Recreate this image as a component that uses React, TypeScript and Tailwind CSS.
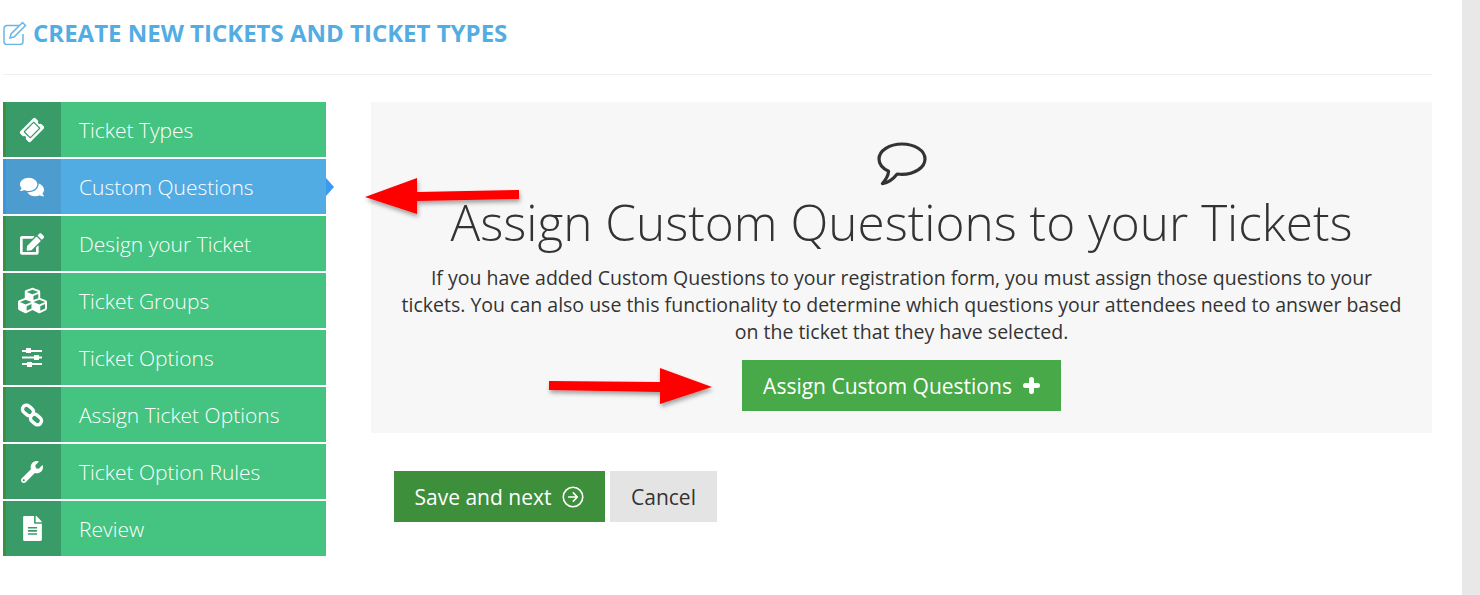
import React from "react";
import { FaTicketAlt, FaComments, FaEdit, FaCubes, FaWrench, FaFileAlt } from "react-icons/fa";
import { IoArrowForwardCircleOutline } from "react-icons/io5";

function SlidersIcon() {
  return (
    <svg width="20" height="19" viewBox="0 0 20 19" fill="white">
      <rect x="0" y="2" width="20" height="2" />
      <rect x="0" y="8.500" width="20" height="2" />
      <rect x="0" y="15" width="20" height="2" />
      <rect x="4" y="0" width="5" height="5" />
      <rect x="12" y="7" width="5" height="5" />
      <rect x="5" y="14" width="5" height="5" />
    </svg>
  );
}

function ChainIcon() {
  return (
    <svg width="24" height="24" viewBox="0 0 24 24" fill="none" stroke="white" strokeWidth="3.400">
      <rect x="2" y="3.500" width="12" height="8" rx="4" transform="rotate(40 8 7.500)" />
      <rect x="10" y="12.500" width="12" height="8" rx="4" transform="rotate(40 16 16.500)" />
    </svg>
  );
}

const items = [
  { label: "Ticket Types", icon: <FaTicketAlt size={22} className="-rotate-45" /> },
  { label: "Custom Questions", icon: <FaComments size={24} />, active: true },
  { label: "Design your Ticket", icon: <FaEdit size={24} /> },
  { label: "Ticket Groups", icon: <FaCubes size={29} /> },
  { label: "Ticket Options", icon: <SlidersIcon /> },
  { label: "Assign Ticket Options", icon: <ChainIcon /> },
  { label: "Ticket Option Rules", icon: <FaWrench size={22} /> },
  { label: "Review", icon: <FaFileAlt size={25} /> },
];

function RedArrow({ dir }: { dir: "left" | "right" }) {
  return (
    <svg width="170" height="56" viewBox="0 0 170 56" className="overflow-visible">
      <defs>
        <filter id={`s-${dir}`} x="-10%" y="-20%" width="120%" height="150%">
          <feDropShadow dx="1" dy="3" stdDeviation="2" floodColor="#000" floodOpacity="0.35" />
        </filter>
      </defs>
      {dir === "left" ? (
        <polygon filter={`url(#s-${dir})`} fill="#ff0000" points="0,26 52,7 52,21 154,19 154,28 52,30 52,43" />
      ) : (
        <polygon filter={`url(#s-${dir})`} fill="#ff0000" points="0,13 111,14 111,0 163,19 111,36 111,24 0,22" />
      )}
    </svg>
  );
}

export default function App() {
  return (
    <div className="flex h-[595px] w-[1480px] overflow-hidden bg-white font-['Open_Sans',sans-serif] text-[#333]">
      <div className="relative h-full w-[1462px] pl-[3px] pr-[30px]">
        <div className="flex h-[75px] items-start border-b border-[#eeeeee] pt-[16px]">
          <svg width="24" height="24" viewBox="0 0 24 24" fill="none" stroke="#68b6e8" strokeWidth="1.500" className="mt-[5px]">
            <path d="M16 4.500H4a3 3 0 0 0-3 3v13a3 3 0 0 0 3 3h13a3 3 0 0 0 3-3V13" />
            <path d="M19.500 1.500l3 3L11 16l-4 1 1-4z" />
          </svg>
          <h1 className="ml-[6px] text-[24px] font-bold leading-[33px] text-[#52ade4]">
            CREATE NEW TICKETS AND TICKET TYPES
          </h1>
        </div>
        <div className="mt-[27px] flex items-start">
          <nav className="flex w-[323px] shrink-0 flex-col gap-[2px]">
            {items.map(({ label, icon, active }) => (
              <div
                key={label}
                className={`relative flex h-[55px] items-center text-white ${active ? "bg-[#51ace3]" : "bg-[#45c380]"}`}
              >
                <div
                  className={`flex h-full w-[58px] shrink-0 items-center justify-center border-l-[3px] pr-[3px] ${
                    active ? "border-[#3b96de] bg-[#4c9ccf]" : "border-[#3f8f3c] bg-[#389b68]"
                  }`}
                >
                  {icon}
                </div>
                <span className="ml-[18px] pt-[2px] text-[21px] font-light leading-[27px]">{label}</span>
                {active && (
                  <span className="absolute left-full top-1/2 h-0 w-0 -translate-y-1/2 border-y-[9px] border-l-[8px] border-y-transparent border-l-[#3b9af0]" />
                )}
              </div>
            ))}
          </nav>
          <div className="ml-[45px] flex min-w-0 flex-1 flex-col">
            <section className="flex h-[331px] flex-col items-center bg-[#f7f7f7] px-[30px] pt-[39px] text-center">
              <svg width="52" height="46" viewBox="0 0 52 46" fill="none" stroke="#333" strokeWidth="3.200" strokeLinejoin="round">
                <path d="M26 3C13.500 3 3 9.600 3 18c0 5 3.600 9.400 9.600 12.200-.3 3.600-2.200 8-6.200 12.400 5.600-.6 10.800-4.600 14.800-9.600 1.600.2 3.200.4 4.800.4 12.500 0 23-6.800 23-15.400S38.500 3 26 3z" />
              </svg>
              <h2 className="mt-[3px] whitespace-nowrap text-[49.5px] font-light leading-[65px]">
                Assign Custom Questions to your Tickets
              </h2>
              <p className="mt-[9px] text-[19.5px] leading-[27px]">
                If you have added Custom Questions to your registration form, you must assign those questions to your tickets. You can also use this functionality to determine which questions your attendees need to answer based on the ticket that they have selected.
              </p>
              <button className="mt-[15px] flex h-[51px] w-[319px] items-center justify-center gap-[11px] bg-[#47a947] pt-[2px] text-[21px] text-white">
                Assign Custom Questions
                <svg width="17" height="17" viewBox="0 0 17 17" stroke="white" strokeWidth="5" strokeLinecap="round" className="-translate-y-[1px]">
                  <path d="M8.500 2.500v12M2.500 8.500h12" />
                </svg>
              </button>
            </section>
            <div className="ml-[23px] mt-[38px] flex gap-[5px]">
              <button className="flex h-[51px] w-[211px] items-center justify-center gap-[9px] bg-[#3d8f3b] pl-[2px] pt-[2px] text-[21px] text-white">
                Save and next <IoArrowForwardCircleOutline size={26} className="-translate-y-[1px]" />
              </button>
              <button className="h-[51px] w-[107px] bg-[#e4e4e4] pt-[2px] text-[21px] text-[#333]">Cancel</button>
            </div>
          </div>
        </div>
        <div className="absolute left-[365px] top-[171px]">
          <RedArrow dir="left" />
        </div>
        <div className="absolute left-[549px] top-[368px]">
          <RedArrow dir="right" />
        </div>
      </div>
      <div className="h-full w-[18px] bg-[#e8e8e8]" />
    </div>
  );
}
